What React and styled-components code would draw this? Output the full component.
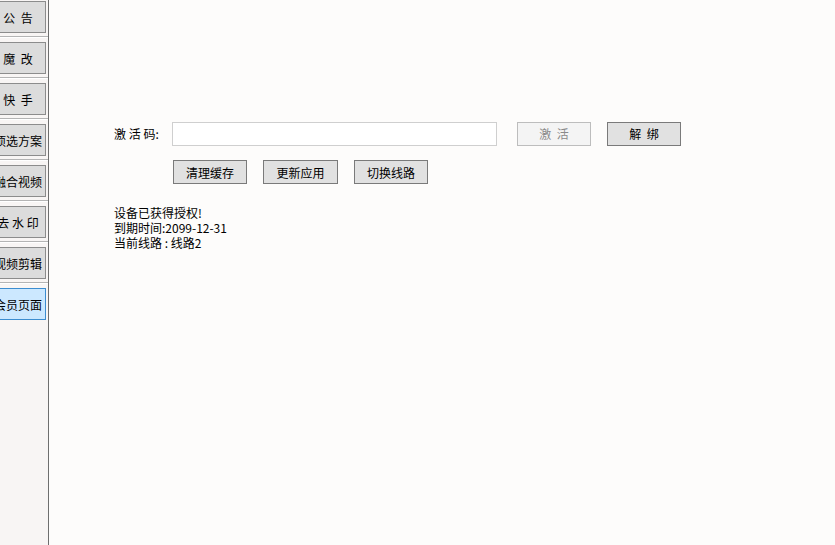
import React from "react";
import styled, { createGlobalStyle } from "styled-components";

const Global = createGlobalStyle`
  html, body { margin: 0; padding: 0; }
  body {
    font-family: "Noto Sans CJK SC", "Liberation Sans", sans-serif;
    font-size: 12px;
    color: #000;
    background: #fdfcfb;
  }
`;

const Page = styled.div`
  display: flex;
  width: 835px;
  height: 545px;
  overflow: hidden;
`;

const Sidebar = styled.div`
  width: 48px;
  flex: none;
  background: #f8f5f4;
  border-right: 1px solid #6e6e6e;
  overflow: hidden;
  display: flex;
  flex-direction: column;
  padding-top: 1px;
`;

const NavButton = styled.div`
  width: 56px;
  height: 32px;
  margin-left: -10px;
  box-sizing: border-box;
  flex: none;
  display: flex;
  align-items: center;
  justify-content: center;
  white-space: pre;
  background: ${(p) => (p.$active ? "#cce8ff" : "#dcdcdc")};
  border: 1px solid ${(p) => (p.$active ? "#3c8dd0" : "#8c8c8c")};
`;

const Separator = styled.div`
  flex: none;
  height: 1px;
  margin: 3px 0 4px;
  background: #b4b4b4;
  border-bottom: 1px solid #ffffff;
`;

const Main = styled.div`
  flex: 1;
  padding: 121px 0 0 65px;
`;

const Row = styled.div`
  display: flex;
  align-items: center;
  height: 25px;
`;

const Label = styled.div`
  width: 58px;
  white-space: pre;
`;

const Input = styled.input`
  width: 325px;
  height: 24px;
  box-sizing: border-box;
  border: 1px solid #cfcfcf;
  background: #fff;
  outline: none;
  margin: 0 20px 0 0;
  padding: 0 4px;
`;

const Button = styled.div`
  width: ${(p) => p.$w || 74}px;
  height: ${(p) => p.$h || 24}px;
  box-sizing: border-box;
  display: flex;
  align-items: center;
  justify-content: center;
  white-space: pre;
  margin-right: ${(p) => p.$mr || 0}px;
  background: ${(p) => (p.$disabled ? "#f4f4f4" : "#e1e1e1")};
  color: ${(p) => (p.$disabled ? "#8a8a8a" : "#000")};
  border: 1px solid ${(p) => (p.$disabled ? "#bdbdbd" : "#7a7a7a")};
`;

const ToolRow = styled.div`
  display: flex;
  gap: 16px;
  margin: 14px 0 0 59px;
`;

const Info = styled.div`
  margin-top: 21px;
  line-height: 15px;
`;

const navItems = ["公  告", "魔  改", "快  手", "项选方案", "融合视频", "去 水 印", "视频剪辑", "会员页面"];

export default function App() {
  return (
    <Page>
      <Global />
      <Sidebar>
        {navItems.map((t, i) => (
          <React.Fragment key={t}>
            {i > 0 && <Separator />}
            <NavButton $active={i === navItems.length - 1}>{t}</NavButton>
          </React.Fragment>
        ))}
      </Sidebar>
      <Main>
        <Row>
          <Label>{"激 活 码:"}</Label>
          <Input />
          <Button $disabled $mr={16}>{"激  活"}</Button>
          <Button>{"解  绑"}</Button>
        </Row>
        <ToolRow>
          <Button>清理缓存</Button>
          <Button $w={75}>更新应用</Button>
          <Button>切换线路</Button>
        </ToolRow>
        <Info>
          <div>设备已获得授权!</div>
          <div>到期时间:2099-12-31</div>
          <div>当前线路 : 线路2</div>
        </Info>
      </Main>
    </Page>
  );
}
